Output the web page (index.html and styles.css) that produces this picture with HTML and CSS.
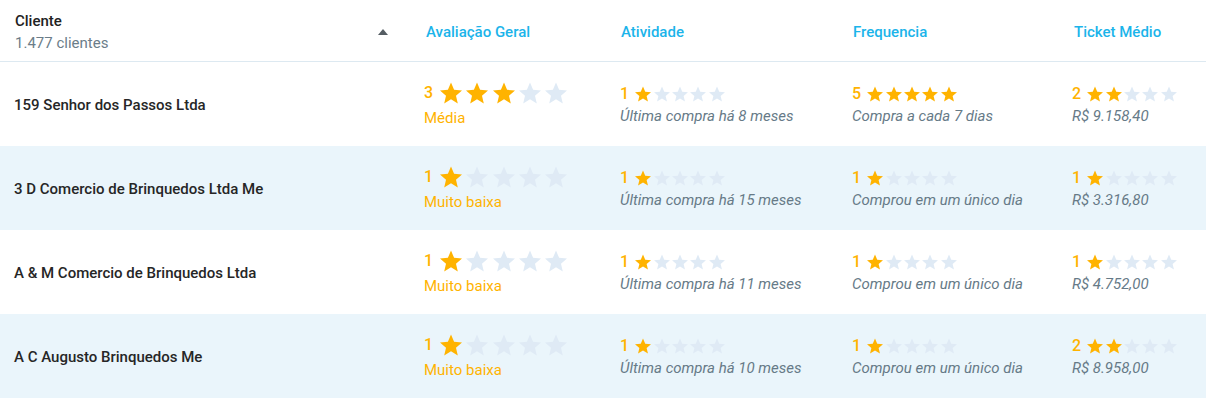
FILE: index.html
```html
<!DOCTYPE html>
<html lang="pt-BR">
<head>
  <meta charset="UTF-8">
  <meta name="viewport" content="width=device-width, initial-scale=1.0">
  <title>Clientes</title>
  <link rel="stylesheet" href="styles.css">
</head>
<body>
  <svg width="0" height="0" class="defs">
    <defs>
      <path id="star" d="M12 17.27L18.18 21l-1.64-7.03L22 9.24l-7.19-.61L12 2 9.19 8.63 2 9.24l5.46 4.73L5.82 21z"/>
    </defs>
  </svg>

  <div class="table">
    <div class="row head">
      <div class="cell client-head">
        <div>
          <div class="title">Cliente</div>
          <div class="count">1.477 clientes</div>
        </div>
        <span class="sort"></span>
      </div>
      <div class="cell col-title">Avaliação Geral</div>
      <div class="cell col-title">Atividade</div>
      <div class="cell col-title">Frequencia</div>
      <div class="cell col-title">Ticket Médio</div>
    </div>
    <div id="rows"></div>
  </div>

  <script>
    const clients = [
      { name: "159 Senhor dos Passos Ltda", geral: 3, geralText: "Média", ativ: 1, ativText: "Última compra há 8 meses", freq: 5, freqText: "Compra a cada 7 dias", ticket: 2, ticketText: "R$ 9.158,40" },
      { name: "3 D Comercio de Brinquedos Ltda Me", geral: 1, geralText: "Muito baixa", ativ: 1, ativText: "Última compra há 15 meses", freq: 1, freqText: "Comprou em um único dia", ticket: 1, ticketText: "R$ 3.316,80" },
      { name: "A & M Comercio de Brinquedos Ltda", geral: 1, geralText: "Muito baixa", ativ: 1, ativText: "Última compra há 11 meses", freq: 1, freqText: "Comprou em um único dia", ticket: 1, ticketText: "R$ 4.752,00" },
      { name: "A C Augusto Brinquedos Me", geral: 1, geralText: "Muito baixa", ativ: 1, ativText: "Última compra há 10 meses", freq: 1, freqText: "Comprou em um único dia", ticket: 2, ticketText: "R$ 8.958,00" }
    ];

    function stars(n, size) {
      let html = "";
      for (let i = 1; i <= 5; i++) {
        html += `<svg class="star ${size} ${i <= n ? "on" : ""}" viewBox="2 1.5 20 20"><use href="#star"/></svg>`;
      }
      return html;
    }

    function score(n, text, size, textClass) {
      return `
        <div class="score">
          <div class="line ${size}"><span class="num">${n}</span>${stars(n, size)}</div>
          <div class="${textClass}">${text}</div>
        </div>`;
    }

    document.getElementById("rows").innerHTML = clients.map((c, i) => `
      <div class="row item ${i % 2 ? "alt" : ""}">
        <div class="cell name">${c.name}</div>
        <div class="cell">${score(c.geral, c.geralText, "big", "level")}</div>
        <div class="cell">${score(c.ativ, c.ativText, "small", "note")}</div>
        <div class="cell">${score(c.freq, c.freqText, "small", "note")}</div>
        <div class="cell">${score(c.ticket, c.ticketText, "small", "note")}</div>
      </div>
    `).join("");
  </script>
</body>
</html>
```

FILE: styles.css
```css
body {
  margin: 0;
  font-family: Roboto, "Liberation Sans", sans-serif;
  font-size: 15px;
  color: #222;
  background: #fff;
}
.defs {
  position: absolute;
}
.row {
  display: grid;
  grid-template-columns: 410px 195px 232px 221px 1fr;
}
.cell {
  padding-left: 16px;
  display: flex;
  align-items: center;
}
.head {
  height: 61px;
  border-bottom: 1px solid #dde9f1;
}
.client-head {
  padding-left: 15px;
  padding-right: 22px;
  justify-content: space-between;
}
.title {
  font-weight: 500;
  line-height: 20px;
  color: #222;
  margin-top: 3px;
}
.count {
  color: #6b7d89;
  line-height: 20px;
  margin-top: 2px;
}
.sort {
  width: 0;
  height: 0;
  border-left: 5.5px solid transparent;
  border-right: 5.5px solid transparent;
  border-bottom: 6px solid #555d63;
  margin-top: 3px;
}
.col-title {
  color: #1bb4ea;
  font-weight: 500;
  padding-top: 2px;
}
.item {
  height: 84px;
}
.item.alt {
  background: #eaf5fb;
}
.name {
  font-weight: 500;
  padding-left: 14px;
  padding-top: 1px;
  color: #262626;
}
.item .cell:nth-child(2) {
  padding-left: 14px;
}
.item .cell:nth-child(3),
.item .cell:nth-child(4) {
  padding-left: 15px;
}
.item .cell:nth-child(5) {
  padding-left: 14px;
}
.score {
  display: flex;
  flex-direction: column;
}
.line {
  display: flex;
  align-items: center;
}
.line.big {
  height: 24px;
  gap: 4.2px;
  margin-top: 1px;
}
.line.small {
  height: 20px;
  gap: 2.3px;
  margin-top: 1px;
}
.num {
  color: #ffb300;
  font-size: 16px;
  font-weight: 500;
  margin-right: 4px;
}
.line.big .num {
  margin-right: 3px;
  transform: translateY(-1px);
}
.star {
  fill: #dfeaf5;
}
.star.on {
  fill: #ffb300;
}
.star.big {
  width: 22px;
  height: 22px;
}
.star.small {
  width: 16px;
  height: 16px;
}
.level {
  color: #ffb300;
  line-height: 20px;
  margin-top: 3px;
}
.note {
  color: #667a87;
  font-style: italic;
  line-height: 20px;
  margin-top: 2px;
}
```
